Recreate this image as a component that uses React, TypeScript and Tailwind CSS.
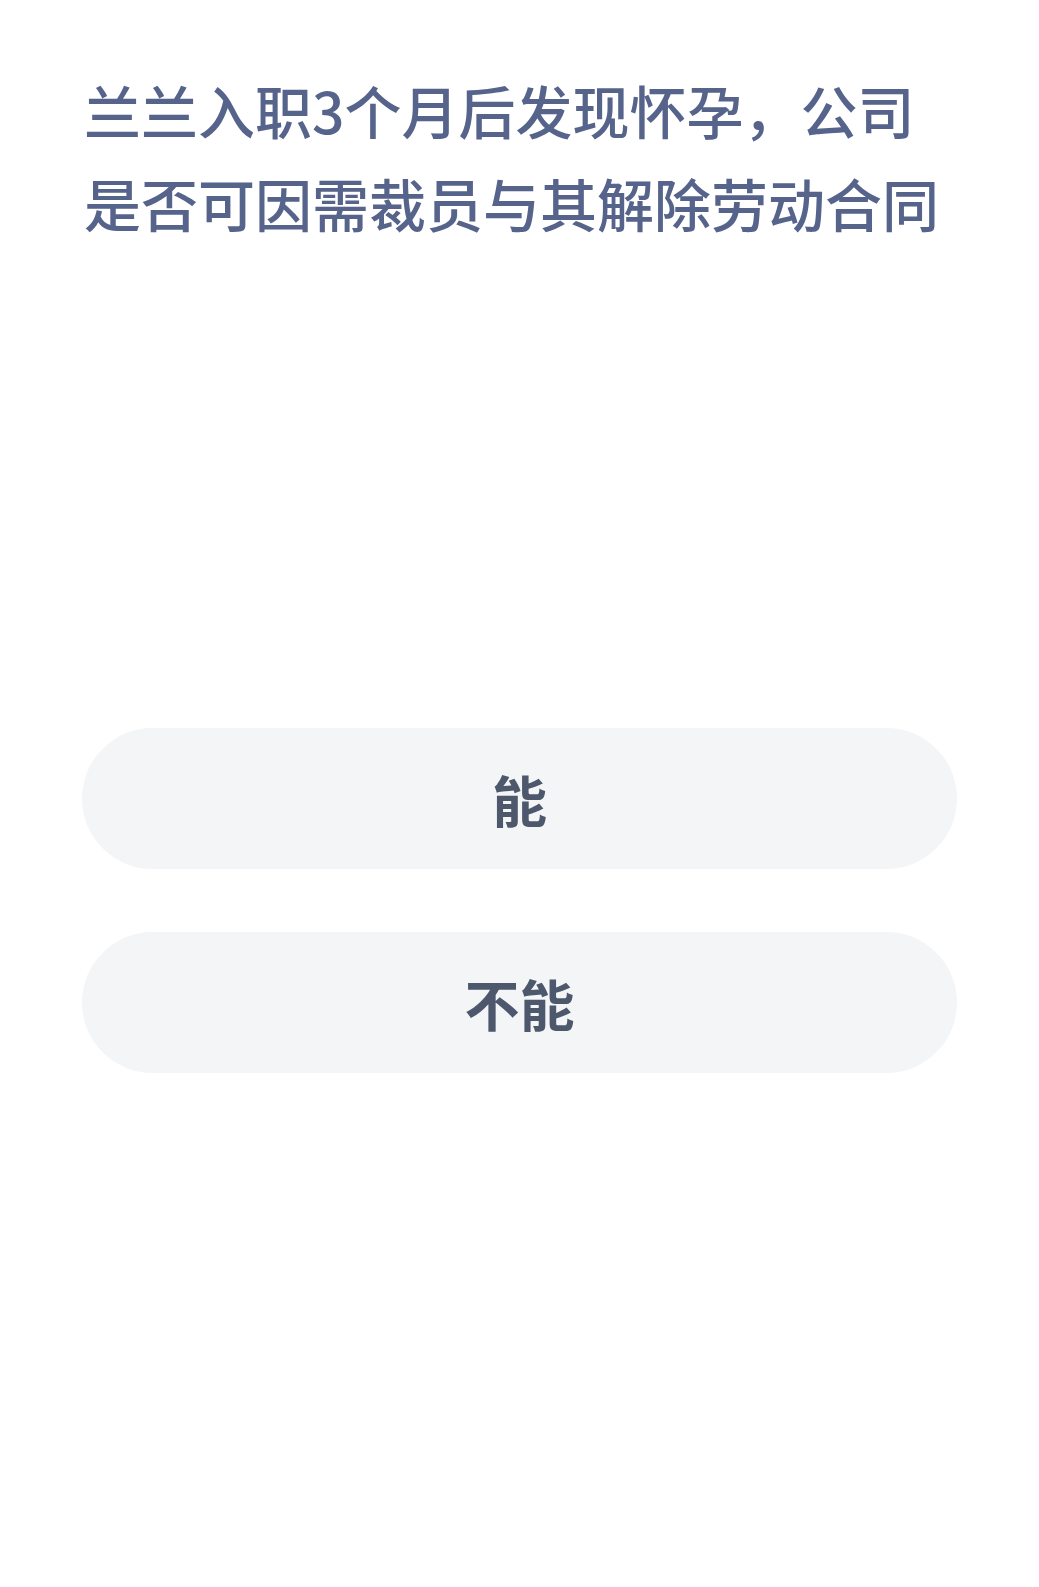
export default function App() {
  const options = ["能", "不能"];
  return (
    <div
      className="min-h-[1587px] w-full bg-white px-[82px]"
      style={{ fontFamily: '"Noto Sans CJK SC", "Noto Sans", sans-serif' }}
    >
      <h1 className="pt-[63px] pl-[2px] text-[57px] font-medium leading-[93px] text-[#56648c]">
        兰兰入职3个月后发现怀孕，公司是否可因需裁员与其解除劳动合同
      </h1>
      <div className="mt-[479px] flex flex-col gap-[63px]">
        {options.map((o) => (
          <button
            key={o}
            className="flex h-[141px] w-full items-center justify-center rounded-full bg-[#f4f5f7] text-[55px] font-semibold text-[#4d586c]"
          >
            {o}
          </button>
        ))}
      </div>
    </div>
  );
}
